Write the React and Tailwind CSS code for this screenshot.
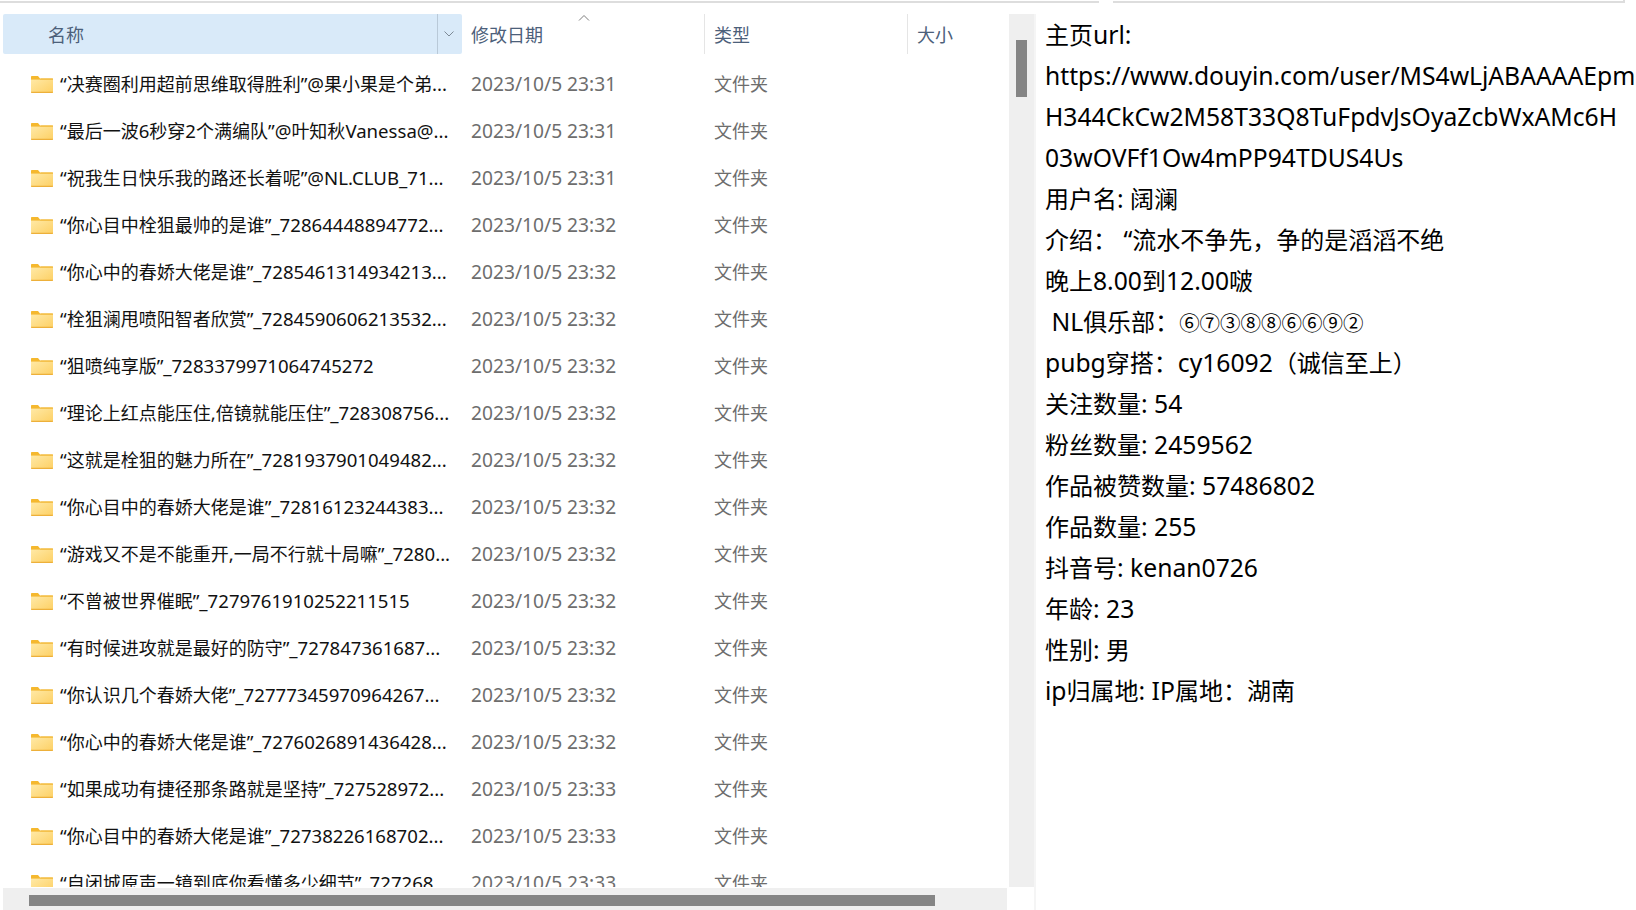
const F = { fontFamily: '"Noto Sans","Noto Sans CJK SC",sans-serif' };
const rows = [
  ["“决赛圈利用超前思维取得胜利”@果小果是个弟...", "2023/10/5 23:31"],
  ["“最后一波6秒穿2个满编队”@叶知秋Vanessa@...", "2023/10/5 23:31"],
  ["“祝我生日快乐我的路还长着呢”@NL.CLUB_71...", "2023/10/5 23:31"],
  ["“你心目中栓狙最帅的是谁”_72864448894772...", "2023/10/5 23:32"],
  ["“你心中的春娇大佬是谁”_7285461314934213...", "2023/10/5 23:32"],
  ["“栓狙澜甩喷阳智者欣赏”_7284590606213532...", "2023/10/5 23:32"],
  ["“狙喷纯享版”_7283379971064745272", "2023/10/5 23:32"],
  ["“理论上红点能压住,倍镜就能压住”_728308756...", "2023/10/5 23:32"],
  ["“这就是栓狙的魅力所在”_7281937901049482...", "2023/10/5 23:32"],
  ["“你心目中的春娇大佬是谁”_72816123244383...", "2023/10/5 23:32"],
  ["“游戏又不是不能重开,一局不行就十局嘛”_7280...", "2023/10/5 23:32"],
  ["“不曾被世界催眠”_7279761910252211515", "2023/10/5 23:32"],
  ["“有时候进攻就是最好的防守”_727847361687...", "2023/10/5 23:32"],
  ["“你认识几个春娇大佬”_72777345970964267...", "2023/10/5 23:32"],
  ["“你心中的春娇大佬是谁”_7276026891436428...", "2023/10/5 23:32"],
  ["“如果成功有捷径那条路就是坚持”_727528972...", "2023/10/5 23:33"],
  ["“你心目中的春娇大佬是谁”_72738226168702...", "2023/10/5 23:33"],
  ["“自闭城原声一镜到底你看懂多少细节”_727268...", "2023/10/5 23:33"],
];
const info = [
  "主页url:",
  "https://www.douyin.com/user/MS4wLjABAAAAEpm",
  "H344CkCw2M58T33Q8TuFpdvJsOyaZcbWxAMc6H",
  "03wOVFf1Ow4mPP94TDUS4Us",
  "用户名: 阔澜",
  "介绍：\u00a0“流水不争先，争的是滔滔不绝",
  "晚上8.00到12.00啵",
  "\u00a0NL俱乐部：⑥⑦③⑧⑧⑥⑥⑨②",
  "pubg穿搭：cy16092（诚信至上）",
  "关注数量: 54",
  "粉丝数量: 2459562",
  "作品被赞数量: 57486802",
  "作品数量: 255",
  "抖音号: kenan0726",
  "年龄: 23",
  "性别: 男",
  "ip归属地: IP属地：湖南",
];
// Latin and digit runs are set slightly larger than the CJK runs, as in the reference's font
function Mixed({ text, latin, digit, circled }) {
  const parts = text.split(/([0-9]{3,}|[\x00-\x7f\u00a0“”]+|[①-⑨]+)/).filter(Boolean);
  return parts.map((p, i) => {
    if (/^[①-⑨]/.test(p)) return <span key={i} className={circled}>{p}</span>;
    if (/^[0-9]{3,}$/.test(p)) return <span key={i} className={digit}>{p}</span>;
    if (/^[\x00-\x7f\u00a0“”]/.test(p)) return <span key={i} className={latin}>{p}</span>;
    return <span key={i}>{p}</span>;
  });
}
function Folder() {
  return (
    <svg width="22" height="17" viewBox="0 0 22 17" className="shrink-0">
      <defs>
        <linearGradient id="fb" x1="0" y1="0" x2="1" y2="1">
          <stop offset="0" stopColor="#ffe9a6" />
          <stop offset="1" stopColor="#fdd064" />
        </linearGradient>
      </defs>
      <path d="M0 1C0 .4.4 0 1 0h6l2 2.500h12c.6 0 1 .4 1 1V5H0Z" fill="#f5b82e" />
      <path d="M0 3.500h22V16c0 .6-.4 1-1 1H1c-.6 0-1-.4-1-1Z" fill="url(#fb)" />
      <path d="M0 3.500h9l1-1h12v1.200H0Z" fill="#f2bd45" />
      <path d="M0 15.800h22v.4c0 .5-.4.800-1 .800H1c-.6 0-1-.3-1-.8Z" fill="#edb03a" />
    </svg>
  );
}
export default function App() {
  return (
    <div className="w-[1636px] h-[910px] bg-white overflow-hidden flex flex-col" style={F}>
      <div className="h-[14px] shrink-0 flex gap-[14px]">
        <div className="w-[1099px] h-[3px] border-b-2 border-[#dddddd]" />
        <div className="w-[512px] h-[3px] border-b-2 border-r-2 border-[#dddddd]" />
      </div>
      <div className="flex flex-1 min-h-0">
        <div className="w-[1034px] shrink-0 flex flex-col pl-[3px]">
          <div className="flex flex-1 min-h-0">
            <div className="w-[1005px] shrink-0 flex flex-col">
              <div className="h-[40px] shrink-0 flex text-[18px] text-[#4c607a] relative">
                <div className="w-[459px] shrink-0 bg-[#d9eaf9] rounded-[2px] flex items-center">
                  <span className="ml-[45px] pt-[2px] flex-1">名称</span>
                  <div className="w-[25px] h-full border-l border-[#b9c9d8] flex items-center justify-center pr-[3px]">
                    <svg width="12" height="8" viewBox="0 0 12 8" fill="none" stroke="#7d8a96" strokeWidth="1"><path d="M1.500 1.500 6 6l4.500-4.500" /></svg>
                  </div>
                </div>
                <div className="w-[242px] shrink-0 pl-[9px] pt-[2px] flex items-center">修改日期</div>
                <div className="w-[203px] shrink-0 border-l border-[#e5e5e5] pl-[9px] pt-[2px] flex items-center">类型</div>
                <div className="flex-1 border-l border-[#e5e5e5] pl-[9px] pt-[2px] flex items-center">大小</div>
                <svg className="absolute left-[575px] top-[0px]" width="12" height="8" viewBox="0 0 12 8" fill="none" stroke="#7d7d7d" strokeWidth="1"><path d="M1 6.500 6 1.500l5 5" /></svg>
              </div>
              <div className="flex-1 min-h-0 overflow-hidden pt-[7px]">
                {rows.map((r, i) => (
                  <div key={i} className="h-[47px] flex items-center text-[18px] whitespace-nowrap">
                    <div className="w-[459px] shrink-0 flex items-center pl-[28px] gap-[7px] text-[#111111] overflow-hidden">
                      <Folder />
                      <span className="-mt-[1px]"><Mixed text={r[0]} latin="text-[18.6px]" digit="text-[19.7px]" /></span>
                    </div>
                    <div className="w-[243px] shrink-0 pl-[9px] text-[#6d6d6d] text-[19.2px]">{r[1]}</div>
                    <div className="pl-[9px] text-[#6d6d6d]">文件夹</div>
                  </div>
                ))}
              </div>
            </div>
            <div className="w-[25px] ml-[1px] bg-[#efefef] pt-[26px] flex justify-center shrink-0">
              <div className="w-[11px] h-[57px] bg-[#858585]" />
            </div>
          </div>
          <div className="h-[22px] w-[1004px] shrink-0 mt-[1px] bg-[#efefef] pt-[7px] pl-[26px]">
            <div className="w-[906px] h-[11px] bg-[#858585]" />
          </div>
        </div>
        <div className="flex-1 border-l-2 border-[#f5f5f5] pl-[9px] text-[24px] leading-[41px] text-black whitespace-nowrap overflow-hidden">
          <div>
            {info.map((t, i) => (
              <div key={i} className="h-[41px]">
                <Mixed text={t} latin="text-[24.7px]" digit="text-[24.5px]" circled="text-[20.500px]" />
              </div>
            ))}
          </div>
        </div>
      </div>
    </div>
  );
}
